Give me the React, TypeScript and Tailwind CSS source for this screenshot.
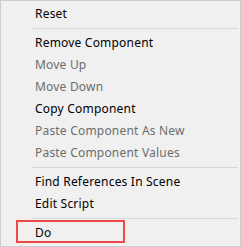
import React from "react";

type Item = { label: string; disabled?: boolean } | { sep: true };

const items: Item[] = [
  { label: "Reset" },
  { sep: true },
  { label: "Remove Component" },
  { label: "Move Up", disabled: true },
  { label: "Move Down", disabled: true },
  { label: "Copy Component" },
  { label: "Paste Component As New", disabled: true },
  { label: "Paste Component Values", disabled: true },
  { sep: true },
  { label: "Find References In Scene" },
  { label: "Edit Script" },
  { sep: true },
  { label: "Do" },
];

export default function App() {
  return (
    <div
      className="relative w-[241px] h-[247px] border border-[#cccccc] bg-[#f0f0f0] pt-[2px] overflow-hidden"
      style={{ fontFamily: '"Noto Sans", "Open Sans", Arial, sans-serif' }}
    >
      {items.map((it, i) =>
        "sep" in it ? (
          <div key={i} className="h-[7px] flex items-center pl-[30px] pr-[2px]">
            <div className="h-px w-full bg-[#d7d7d7]" />
          </div>
        ) : (
          <div
            key={i}
            className={
              "h-[22px] flex items-center pl-[34px] text-[12px] leading-none tracking-[0.2px] whitespace-nowrap " +
              (it.disabled ? "text-[#6d6d6d]" : "text-black")
            }
          >
            {it.label}
          </div>
        )
      )}
      <div className="absolute left-[15px] top-[219px] w-[109px] h-[23px] border-2 border-[#f04848]" />
    </div>
  );
}
